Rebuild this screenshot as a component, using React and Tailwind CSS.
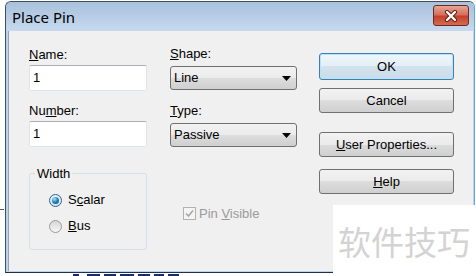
import React from "react";

const sans = "font-['Liberation_Sans',Arial,sans-serif]";

function Combo({ value }) {
  return (
    <div className="h-[24px] w-full rounded-[3px] border border-[#707070] bg-[linear-gradient(#f2f2f2_0%,#ebebeb_50%,#dddddd_50%,#cfcfcf_100%)] flex items-center justify-between pl-[3px] pr-[5px] text-[13px] text-black">
      <span>{value}</span>
      <svg width="9" height="5" viewBox="0 0 9 5">
        <path d="M0 0 H9 L4.5 5 Z" fill="#000" />
      </svg>
    </div>
  );
}

function Button({ children, isDefault, h = "h-[25px]" }) {
  return (
    <div
      className={
        h +
        " w-full rounded-[3px] border flex items-center justify-center text-[13px] text-black " +
        (isDefault
          ? "border-[#3c7fb1] shadow-[inset_0_0_0_1px_#b9e3f7] bg-[linear-gradient(#eef6fb_0%,#e3eef5_50%,#d3e3ee_50%,#c9dce9_100%)]"
          : "border-[#707070] bg-[linear-gradient(#f2f2f2_0%,#ebebeb_50%,#dddddd_50%,#cfcfcf_100%)]")
      }
    >
      {children}
    </div>
  );
}

function TextBox({ value }) {
  return (
    <div className="h-[26px] w-full rounded-[2px] border border-[#dfe3ea] border-t-[#abadb3] bg-white flex items-center pl-[3px] text-[13px] text-black">
      {value}
    </div>
  );
}

function Radio({ checked, children }) {
  return (
    <div className="flex items-center gap-[6px] h-[16px]">
      <div
        className={
          "w-[13px] h-[13px] rounded-full border flex items-center justify-center " +
          (checked
            ? "border-[#2c628b] bg-[linear-gradient(#e6f2f9,#d0e4f0)]"
            : "border-[#9a9a9a] bg-[linear-gradient(#d6d6d6,#f7f7f7)]")
        }
      >
        {checked && (
          <div className="w-[7px] h-[7px] rounded-full bg-[radial-gradient(circle_at_35%_30%,#a8e4ff_0%,#2a86c2_45%,#0c3c60_100%)]" />
        )}
      </div>
      <span className="text-[13px] text-black">{children}</span>
    </div>
  );
}

export default function App() {
  return (
    <div className={"relative w-[476px] h-[276px] bg-white overflow-hidden " + sans}>
      <div className="ml-[5px] mt-[1px] w-[470px] h-[272px] flex flex-col rounded-t-[6px] border border-[#3e4e60] border-r-[#5ea9d9] border-b-[#1f3050] bg-[#bcd3ea]">
        <div className="h-[29px] flex justify-between rounded-t-[5px] bg-[linear-gradient(#a9c1dc,#c6d9ee)]">
          <span className="pl-[6px] pt-[5px] font-['Noto_Sans',sans-serif] text-[15px] leading-[20px] text-black">
            Place Pin
          </span>
          <div className="mt-[3px] mr-[5px] w-[36px] h-[21px] rounded-[3px] border border-[#6b2b20] bg-[linear-gradient(#e8a596_0%,#d5705c_45%,#c3412b_55%,#d86a4f_100%)] flex items-center justify-center">
            <svg width="14" height="12" viewBox="0 0 14 12">
              <path d="M3 2 L11 10 M11 2 L3 10" stroke="#5b1d12" strokeWidth="4.2" strokeLinecap="round" />
              <path d="M3 2 L11 10 M11 2 L3 10" stroke="#ffffff" strokeWidth="2.4" strokeLinecap="round" />
            </svg>
          </div>
        </div>

        <div className="flex-1 ml-[2px] mr-[1px] mb-[1px] bg-[#f0f0f0] border-l border-[#8ea3ba] flex pl-[20px]">
          <div className="w-[118px] flex flex-col pt-[16px]">
            <span className="text-[13px] leading-[15px] text-black">
              <u>N</u>ame:
            </span>
            <div className="mt-[3px]">
              <TextBox value="1" />
            </div>
            <span className="mt-[12px] text-[13px] leading-[15px] text-black">
              Nu<u>m</u>ber:
            </span>
            <div className="mt-[3px]">
              <TextBox value="1" />
            </div>
            <div className="relative mt-[26px] h-[77px] rounded-[3px] border border-[#d5dfe5] pl-[19px] pt-[18px] flex flex-col gap-[10px]">
              <span className="absolute -top-[8px] left-[5px] px-[2px] bg-[#f0f0f0] text-[13px] leading-[15px] text-black">
                Width
              </span>
              <Radio checked>
                S<u>c</u>alar
              </Radio>
              <Radio>
                <u>B</u>us
              </Radio>
            </div>
          </div>

          <div className="w-[127px] ml-[23px] flex flex-col pt-[15px]">
            <span className="text-[13px] leading-[15px] text-black">
              <u>S</u>hape:
            </span>
            <div className="mt-[5px]">
              <Combo value="Line" />
            </div>
            <span className="mt-[13px] text-[13px] leading-[15px] text-black">
              <u>T</u>ype:
            </span>
            <div className="mt-[5px]">
              <Combo value="Passive" />
            </div>
            <div className="mt-[60px] pl-[13px] flex items-center gap-[3px] h-[13px]">
              <div className="w-[13px] h-[13px] border border-[#b1b1b1] bg-[#f4f4f4] flex items-center justify-center">
                <svg width="9" height="9" viewBox="0 0 9 9">
                  <path d="M1 4.5 L3.5 7 L8 1.5" stroke="#a8a8a8" strokeWidth="1.6" fill="none" />
                </svg>
              </div>
              <span className="text-[13px] text-[#9a9a9a]">
                Pin <u>V</u>isible
              </span>
            </div>
          </div>

          <div className="w-[135px] ml-[22px] flex flex-col pt-[22px]">
            <Button isDefault h="h-[27px]">OK</Button>
            <div className="mt-[8px]">
              <Button>Cancel</Button>
            </div>
            <div className="mt-[19px]">
              <Button>
                <span>
                  <u>U</u>ser Properties...
                </span>
              </Button>
            </div>
            <div className="mt-[12px]">
              <Button>
                <span>
                  <u>H</u>elp
                </span>
              </Button>
            </div>
          </div>
        </div>
      </div>

      <div className="absolute left-0 top-[209px] w-[4px] h-[1px] bg-[#4a5c80]" />
      <div className="absolute left-[73px] top-[274px] flex gap-[4px]">
        <span className="w-[6px] h-[2px] bg-[#1b2a6b]" />
        <span className="ml-[4px] w-[13px] h-[2px] bg-[#1b2a6b]" />
        <span className="w-[12px] h-[2px] bg-[#1b2a6b]" />
        <span className="w-[14px] h-[2px] bg-[#1b2a6b]" />
        <span className="w-[12px] h-[2px] bg-[#1b2a6b]" />
        <span className="w-[10px] h-[2px] bg-[#1b2a6b]" />
        <span className="w-[11px] h-[2px] bg-[#1b2a6b]" />
      </div>

      <div className="absolute left-[333px] top-[205px] w-[143px] h-[71px] bg-white flex items-center pl-[5px]">
        <span className="font-['Noto_Sans_CJK_SC',sans-serif] text-[33px] leading-[36px] text-[#d3d3d3]">
          软件技巧
        </span>
      </div>
    </div>
  );
}
